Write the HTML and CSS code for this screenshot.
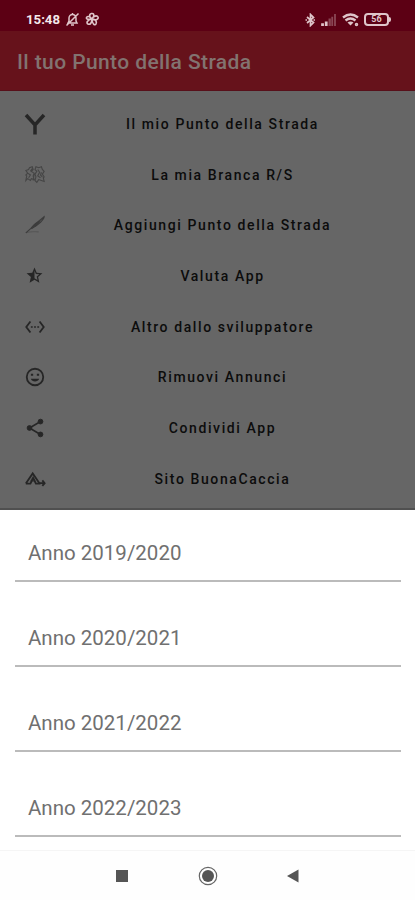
FILE: index.html
```
<!DOCTYPE html>
<html lang="it">
<head>
    <meta charset="UTF-8">
    <meta name="viewport" content="width=device-width, initial-scale=1.0">
    <title>Il tuo Punto della Strada</title>
    <link rel="stylesheet" href="styles.css">
</head>
<body>
    <div class="schermo">
        <!-- Barra di stato -->
        <div class="stato">
            <span class="ora">15:48</span>
            <svg class="campana" width="15" height="15" viewBox="0 0 15 15" fill="none" stroke="currentColor" stroke-width="1.5">
                <path d="M3 11h9l-1-2V6a3.5 3.5 0 0 0-7 0v3zM6 13h3M7.5 1v1.5M1.5 13.5l12-12"/>
            </svg>
            <svg class="ventola" width="15" height="15" viewBox="0 0 15 15" fill="none" stroke="currentColor" stroke-width="1.6">
                <path d="M7 7C4 6 4 2 6.500 1.500S10 4 7 7c1-3 5-4 6-2s-2 4-6 2c4 0 5 3 4 5s-4 0-4-5c0 4-2 6-4 5s-1-4 4-5C3 8 1 7 1.500 5.500S5 4 7 7"/>
            </svg>
            <div class="stato-destra">
                <svg width="13" height="14" viewBox="0 0 13 14" fill="none" stroke="currentColor" stroke-width="1.700">
                    <path d="M3 4l6.500 5.500-3 3v-11l3 3L3 10M1.500 7h1.500M9.500 7H11"/>
                </svg>
                <svg class="segnale" width="16" height="12" viewBox="0 0 17 13" fill="currentColor">
                    <path d="M0 10h3v3H0zM4 8h3v5H4z"/>
                    <path d="M8 5h2.500v8H8zM11 3h2v10h-2zM14 0h2v13h-2z" opacity=".35"/>
                </svg>
                <svg class="wifi" width="18" height="14" viewBox="0 0 18 14" fill="none" stroke="currentColor" stroke-width="2.400">
                    <path d="M1 4.500q7.500-6 15 0M3.500 7.500q5-4 10 0"/>
                    <path d="M5.500 9.500q3-2 6 0L8.500 12.500z" fill="currentColor" stroke="none"/>
                    <circle cx="14.500" cy="11.500" r="1" stroke-width="1.500"/>
                </svg>
                <span class="batteria">56</span>
                <span class="batteria-polo"></span>
            </div>
        </div>

        <header class="titolo">Il tuo Punto della Strada</header>

        <!-- Menu principale -->
        <ul class="menu">
            <li class="voce">
                <svg class="icona grande" viewBox="0 0 24 24" fill="none" stroke="currentColor" stroke-width="3.500">
                    <path d="M3 3l9 10 9-10M12 12v10.500"/>
                </svg>
                <span class="voce-testo">Il mio Punto della Strada</span>
            </li>
            <li class="voce">
                <svg class="icona tenue" viewBox="0 0 24 24" fill="none" stroke="currentColor" stroke-width="1.200">
                    <path d="M2 7l3-1 1-2 3-1 1 3-2 2 3 2-1 3 1 4-3-1-1 2-3-2-2 2 1-5-1-1 2-2zM22 8l-2-2-1-3-3 1-3-1-1 3 2 2-2 3 1 3-1 4 2 2 2-3 3 1 3 1-1-4 1-1-2-3zM4 10l3 2-2 3M9 5L7 8M15 6l2 3-2 4 3 2M19 9l-1 3 2 2M11 11l-1 7"/>
                </svg>
                <span class="voce-testo">La mia Branca R/S</span>
            </li>
            <li class="voce">
                <svg class="icona medio" viewBox="0 0 24 24" fill="none" stroke="currentColor" stroke-width="1.200">
                    <path d="M2 20.500L22 3M8 15c3-4 6-6 9-8l5-4c0 2-2 4-4 6-3 3-6 5-10 6z"/>
                    <path d="M8 16l5-5 4-3-4 5z" fill="currentColor"/>
                    <path d="M2 20.500c5-2 10-1 14-1" opacity=".4"/>
                </svg>
                <span class="voce-testo">Aggiungi Punto della Strada</span>
            </li>
            <li class="voce">
                <svg class="icona piccola" viewBox="0 0 24 24" fill="currentColor">
                    <path d="M22 9.240l-7.190-.62L12 2 9.190 8.630 2 9.240l5.460 4.730L5.820 21 12 17.270 18.180 21l-1.630-7.030L22 9.240zM12 15.400V6.100l1.710 4.040 4.380.38-3.320 2.880 1 4.280L12 15.400z"/>
                </svg>
                <span class="voce-testo">Valuta App</span>
            </li>
            <li class="voce">
                <svg class="icona" viewBox="0 0 24 24" fill="none" stroke="currentColor" stroke-width="2">
                    <path d="M7 6l-4.500 6L7 18M17 6l4.500 6-4.500 6"/>
                    <path d="M7.500 12h2M11 12h2M14.500 12h2" stroke-width="1.600"/>
                </svg>
                <span class="voce-testo">Altro dallo sviluppatore</span>
            </li>
            <li class="voce">
                <svg class="icona" viewBox="0 0 24 24" fill="none" stroke="currentColor" stroke-width="2">
                    <circle cx="12" cy="12" r="9"/>
                    <path d="M7.500 14h9c-1 4-8 4-9 0z" fill="currentColor" stroke="none"/>
                    <path d="M7.500 9.500h2.500M14 9.500h2.500"/>
                </svg>
                <span class="voce-testo">Rimuovi Annunci</span>
            </li>
            <li class="voce">
                <svg class="icona" viewBox="0 0 24 24" fill="currentColor" stroke="currentColor">
                    <path d="M18 5L6 12l12 7" fill="none" stroke-width="1.800"/>
                    <circle cx="18" cy="5" r="2.600"/>
                    <circle cx="6" cy="12" r="2.600"/>
                    <circle cx="18" cy="19" r="2.600"/>
                </svg>
                <span class="voce-testo">Condividi App</span>
            </li>
            <li class="voce">
                <svg class="icona" viewBox="0 0 24 24" fill="none" stroke="currentColor" stroke-width="2">
                    <path d="M2 17L9.500 6 17 17M2 17h5l3-6 3 6h5"/>
                    <path d="M6 15l3.500-6 4 6z" fill="currentColor" opacity=".5" stroke="none"/>
                    <path d="M17 16.500h5M20 13.500l2.500 3-2.500 3"/>
                </svg>
                <span class="voce-testo">Sito BuonaCaccia</span>
            </li>
        </ul>

        <!-- Scelta dell'anno -->
        <div class="anni">
            <div class="anno">Anno 2019/2020</div>
            <div class="anno">Anno 2020/2021</div>
            <div class="anno">Anno 2021/2022</div>
            <div class="anno">Anno 2022/2023</div>
        </div>

        <nav class="navigazione">
            <svg width="22" height="22" viewBox="0 0 22 22"><path d="M5 5h12v12H5z" fill="#555"/></svg>
            <svg width="22" height="22" viewBox="0 0 22 22">
                <circle cx="11" cy="11" r="8.700" fill="none" stroke="#666" stroke-width="1.200"/>
                <circle cx="11" cy="11" r="6" fill="#555"/>
            </svg>
            <svg width="22" height="22" viewBox="0 0 22 22"><path d="M4 11l11.500-6.500v13z" fill="#555"/></svg>
        </nav>
    </div>
</body>
</html>
```
FILE: styles.css
```
* {
    box-sizing: border-box;
}

body {
    margin: 0;
    font-family: Roboto, 'Liberation Sans', sans-serif;
    background-color: #fff;
}

.schermo {
    display: flex;
    flex-direction: column;
    width: 415px;
    height: 900px;
    overflow: hidden;
}

.stato {
    display: flex;
    align-items: center;
    height: 31px;
    padding: 8px 24px 0 26px;
    background-color: #5c0014;
    color: #dfc5ca;
}

.ora {
    width: 35px;
    font-size: 13.2px;
    font-weight: 700;
    color: #f5e8eb;
}

.campana {
    margin-left: 4px;
}

.ventola {
    margin-left: 5px;
}

.stato-destra {
    display: flex;
    align-items: center;
    margin-left: auto;
}

.segnale {
    margin-left: 4px;
}

.wifi {
    margin-left: 5px;
    margin-right: 4px;
}

.batteria {
    width: 25px;
    height: 13px;
    border: 2px solid #dfc5ca;
    border-radius: 4px;
    font-size: 9px;
    font-weight: 700;
    line-height: 9px;
    text-align: center;
}

.batteria-polo {
    width: 2px;
    height: 5px;
    background-color: #dfc5ca;
    border-radius: 0 2px 2px 0;
}

.titolo {
    height: 60px;
    padding-left: 17px;
    border-bottom: 1px solid #58101a;
    background-color: #66121b;
    color: #827370;
    font-size: 21px;
    font-weight: 500;
    letter-spacing: 0.4px;
    line-height: 62px;
}

.menu {
    height: 419px;
    margin: 0;
    padding: 7.500px 40px 0 0;
    border-bottom: 2px solid #505050;
    background-color: #666;
    list-style: none;
    overflow: hidden;
}

.voce {
    display: flex;
    align-items: center;
    height: 50.700px;
    color: #262626;
}

.icona {
    flex: none;
    width: 22px;
    height: 22px;
    margin: 0 24px;
}

.icona.grande {
    width: 24px;
    height: 24px;
    margin: 0 23px;
}

.icona.piccola {
    width: 19px;
    height: 19px;
    margin: 0 26px 0 25px;
}

.icona.tenue {
    color: #454545;
}

.icona.medio {
    color: #3c3c3c;
}

.voce-testo {
    flex: 1;
    color: #0c0c0c;
    font-size: 14px;
    font-weight: 500;
    letter-spacing: 1.6px;
    text-align: center;
}

.anni {
    height: 340px;
    padding: 0 14px 0 15px;
    background-color: #fff;
}

.anno {
    height: 85px;
    padding: 30px 13px 0;
    color: #707070;
    font-size: 20.5px;
    line-height: 27px;
    /* riga sottile sotto ogni anno */
    background: linear-gradient(#bbb, #bbb) 0 70px / 100% 2px no-repeat;
}

.navigazione {
    display: flex;
    justify-content: center;
    align-items: center;
    gap: 64px;
    height: 50px;
    border-top: 1px solid #f5f5f5;
    background-color: #fefefe;
}
```
